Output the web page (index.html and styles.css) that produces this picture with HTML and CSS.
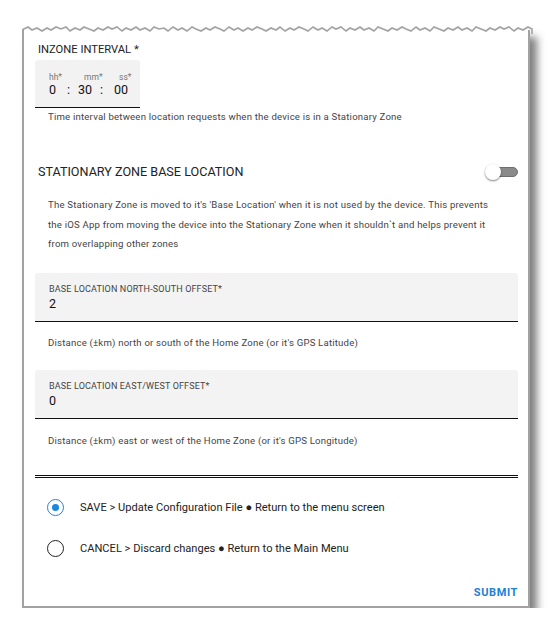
FILE: index.html
```html
<!DOCTYPE html>
<html>
<head>
<meta charset="utf-8">
<link rel="stylesheet" href="styles.css">
</head>
<body>
<div class="card">
  <svg class="torn" width="514" height="10" viewBox="0 0 514 10">
    <polyline fill="none" stroke="#a2a2a2" stroke-width="1.6" points="0,9 0,5 6,2 10,5 15,3 20,6 25,3 29,5 34,2 39,4 44,2 48,6 53,3 58,5 62,2 67,4 72,6 76,3 81,5 86,2 90,4 95,2 100,6 104,3 109,5 114,2 118,5 123,3 128,6 132,2 137,4 142,3 146,6 151,2 156,5 160,3 165,6 170,2 174,4 179,6 184,3 188,5 193,2 198,4 202,6 207,2 212,5 216,3 221,6 226,3 230,5 235,2 240,4 244,6 249,3 254,5 258,2 263,6 268,3 272,5 277,2 282,4 286,6 291,2 296,5 300,3 305,6 310,2 314,4 319,2 324,6 328,3 333,5 338,2 342,5 347,3 352,6 356,2 361,4 366,6 370,3 375,5 380,2 384,4 389,6 394,2 398,5 403,3 408,6 412,2 417,4 422,6 426,3 431,5 436,2 440,5 445,3 450,6 454,2 459,4 464,6 468,3 473,5 478,2 482,4 487,2 492,6 496,3 501,5 506,2 510,4 510,9"/>
  </svg>

  <div class="section-title">INZONE INTERVAL *</div>
  <div class="timebox">
    <div class="time-labels">
      <span class="tl-hh">hh*</span><span class="tl-mm">mm*</span><span class="tl-ss">ss*</span>
    </div>
    <div class="time-values">
      <span class="tv-hh">0</span><span class="tv-sep">:</span><span class="tv-mm">30</span><span class="tv-sep2">:</span><span class="tv-ss">00</span>
    </div>
  </div>
  <div class="helper helper-first">Time interval between location requests when the device is in a Stationary Zone</div>

  <div class="toggle-row">
    <div class="big-title">STATIONARY ZONE BASE LOCATION</div>
    <div class="toggle"><span class="track"></span><span class="thumb"></span></div>
  </div>
  <div class="para">The Stationary Zone is moved to it's 'Base Location' when it is not used by the device. This prevents<br>the iOS App from moving the device into the Stationary Zone when it shouldn`t and helps prevent it<br>from overlapping other zones</div>

  <div class="field field-first">
    <div class="field-label">BASE LOCATION NORTH-SOUTH OFFSET*</div>
    <div class="field-value">2</div>
  </div>
  <div class="helper helper-field">Distance (±km) north or south of the Home Zone (or it's GPS Latitude)</div>

  <div class="field field-second">
    <div class="field-label">BASE LOCATION EAST/WEST OFFSET*</div>
    <div class="field-value">0</div>
  </div>
  <div class="helper helper-field helper-last">Distance (±km) east or west of the Home Zone (or it's GPS Longitude)</div>

  <div class="double-line"></div>

  <div class="radio-row radio-first">
    <span class="radio checked"><span class="dot"></span></span>
    <span class="radio-label">SAVE &gt; Update Configuration File ● Return to the menu screen</span>
  </div>
  <div class="radio-row radio-second">
    <span class="radio"></span>
    <span class="radio-label">CANCEL &gt; Discard changes ● Return to the Main Menu</span>
  </div>

  <div class="actions"><span class="submit">SUBMIT</span></div>
</div>
</body>
</html>
```

FILE: styles.css
```css
html, body {
  margin: 0;
  padding: 0;
  background: #ffffff;
}

body {
  font-family: Roboto, "Liberation Sans", sans-serif;
  color: #222;
}

.card {
  position: relative;
  margin: 30px 0 0 22px;
  width: 483px;
  height: 576px;
  box-sizing: content-box;
  border-left: 2px solid #a2a2a2;
  border-right: 2px solid #a2a2a2;
  border-bottom: 2px solid #a2a2a2;
  background: #fff;
  box-shadow: 7px 7px 8px rgba(0, 0, 0, 0.5);
  padding: 0 10px 0 11px;
}

.torn {
  position: absolute;
  top: -5px;
  left: -2px;
}

.section-title {
  padding-top: 13px;
  margin-left: 3px;
  font-size: 11.2px;
  line-height: 14px;
  color: #222;
}

.timebox {
  margin-top: 3px;
  width: 105px;
  height: 47px;
  background: #f2f2f2;
  border-bottom: 1px solid #111;
  border-radius: 3px 3px 0 0;
  box-sizing: content-box;
}

.time-labels {
  display: flex;
  padding-top: 12px;
  font-size: 8.5px;
  line-height: 10px;
  color: #777;
}

.tl-hh { margin-left: 14px; width: 35px; }
.tl-mm { width: 35px; }

.time-values {
  display: flex;
  margin-top: 1px;
  font-size: 12.5px;
  line-height: 14px;
  color: #111;
}

.tv-hh { margin-left: 14px; width: 18px; }
.tv-sep { width: 11px; }
.tv-mm { width: 22px; }
.tv-sep2 { width: 14px; }

.helper {
  margin-left: 13px;
  font-size: 9.6px;
  line-height: 12px;
  color: #444;
  letter-spacing: 0.2px;
}

.helper-first { margin-top: 3px; }

.toggle-row {
  margin-top: 41px;
  display: flex;
  justify-content: space-between;
  align-items: center;
  height: 16px;
}

.big-title {
  margin-left: 3px;
  font-size: 12.6px;
  line-height: 16px;
  color: #222;
}

.toggle {
  position: relative;
  width: 33px;
  height: 16px;
}

.track {
  position: absolute;
  right: 0;
  top: 3px;
  width: 26px;
  height: 10px;
  border-radius: 5px;
  background: #8a8a8a;
  border: 1px solid #6e6e6e;
  box-sizing: border-box;
}

.thumb {
  position: absolute;
  left: 0;
  top: 0;
  width: 16px;
  height: 16px;
  border-radius: 50%;
  background: #fff;
  box-shadow: 0 1px 2px rgba(0, 0, 0, 0.5);
}

.para {
  margin-top: 15px;
  margin-left: 13px;
  font-size: 9.6px;
  line-height: 19.5px;
  color: #444;
  letter-spacing: 0.2px;
}

.field {
  height: 48px;
  background: #f3f3f3;
  border-bottom: 1px solid #111;
  border-radius: 3px 3px 0 0;
  padding-left: 14px;
  box-sizing: content-box;
}

.field-first { margin-top: 19px; }
.field-second { margin-top: 21px; }

.field-label {
  padding-top: 11px;
  font-size: 9px;
  line-height: 11px;
  color: #444;
  letter-spacing: 0.15px;
}

.field-value {
  margin-top: 1px;
  font-size: 12.5px;
  line-height: 15px;
  color: #111;
}

.helper-field { margin-top: 15px; }
.helper-last { margin-top: 16px; }

.double-line {
  margin-top: 28px;
  height: 1px;
  border-top: 1px solid #111;
  border-bottom: 1px solid #111;
}

.radio-row {
  display: flex;
  align-items: center;
  height: 20px;
}

.radio-first { margin-top: 20px; }
.radio-second { margin-top: 21px; }

.radio {
  margin-left: 12px;
  width: 17px;
  height: 17px;
  border-radius: 50%;
  border: 1.5px solid #222;
  box-sizing: border-box;
  display: flex;
  align-items: center;
  justify-content: center;
}

.radio.checked {
  border-color: #1a86e0;
}

.dot {
  width: 7px;
  height: 7px;
  border-radius: 50%;
  background: #1a86e0;
}

.radio-label {
  margin-left: 16px;
  font-size: 11.1px;
  line-height: 14px;
  color: #222;
}

.actions {
  margin-top: 27px;
  display: flex;
  justify-content: flex-end;
}

.submit {
  font-size: 11px;
  line-height: 14px;
  font-weight: bold;
  color: #1a80d8;
  letter-spacing: 0.6px;
}
```
